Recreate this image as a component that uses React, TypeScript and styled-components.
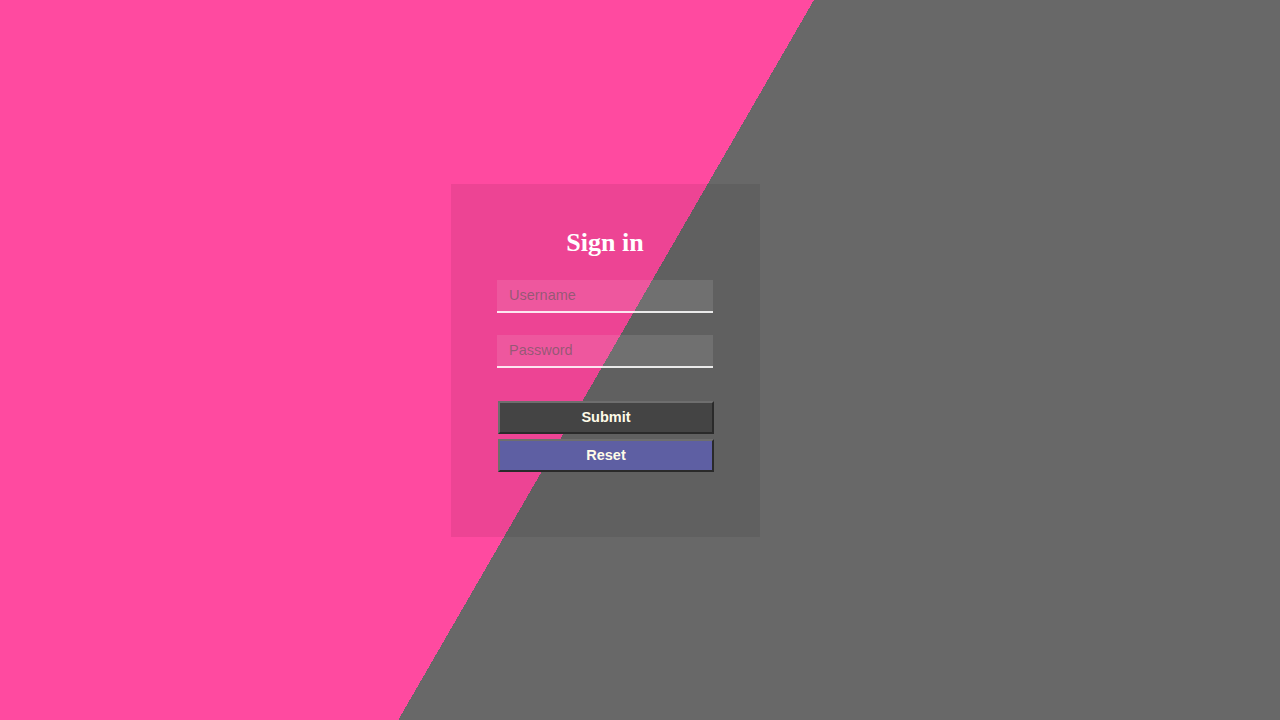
import React from 'react';
import styled, {createGlobalStyle} from 'styled-components';

const GlobalStyle = createGlobalStyle`
  html, body {
    margin: 0;
    padding: 0;
  }

  body {
    font-family: "Liberation Sans", Arial, sans-serif;
  }
`;

export default function App() {
  return (
    <>
      <GlobalStyle/>
      <Page>
        <Card>
          <Title>Sign in</Title>
          <Form onSubmit={e => e.preventDefault()}>
            <Field type="text" placeholder="Username"/>
            <Field type="password" placeholder="Password"/>
            <Buttons>
              <Button type="submit">Submit</Button>
              <Button type="reset" $variant="reset">Reset</Button>
            </Buttons>
          </Form>
        </Card>
      </Page>
    </>
  );
}

const Page = styled.main`
  width: 100%;
  height: 720px;
  display: flex;
  align-items: center;
  padding-left: 451px;
  box-sizing: border-box;
  background: linear-gradient(120deg, #ff4aa0 0%, #ff4aa0 48%, #686868 48%, #686868 100%);
`;

const Card = styled.section`
  width: 309px;
  height: 353px;
  box-sizing: border-box;
  padding: 44px 47px 0 46px;
  background-color: rgba(0, 0, 0, 0.07);
  display: flex;
  flex-direction: column;
`;

const Title = styled.h1`
  margin: 0 0 22px;
  text-align: center;
  font-family: "Liberation Serif", "Times New Roman", serif;
  font-size: 26px;
  font-weight: bold;
  color: #ffffff;
`;

const Form = styled.form`
  display: flex;
  flex-direction: column;
  gap: 22px;
`;

const Field = styled.input`
  width: 216px;
  height: 33px;
  box-sizing: border-box;
  padding: 0 11px 0 12px;
  border: none;
  border-bottom: 2px solid rgba(255, 255, 255, 0.85);
  outline: none;
  background-color: rgba(255, 255, 255, 0.1);
  font-family: "Liberation Sans", Arial, sans-serif;
  font-size: 14.5px;
  color: #ffffff;

  &::placeholder {
    color: rgba(90, 90, 90, 0.6);
  }
`;

const Buttons = styled.div`
  margin-top: 11px;
  display: flex;
  flex-direction: column;
  gap: 5px;
  padding-left: 1px;
`;

const Button = styled.button<{ $variant?: 'submit' | 'reset' }>`
  width: 216px;
  height: 33px;
  box-sizing: border-box;
  border: 2px solid;
  border-color: #6e6e6e #2a2a2a #2a2a2a #6e6e6e;
  background-color: ${p => (p.$variant === 'reset' ? '#5e5fa3' : '#444444')};
  color: #fffbe8;
  font-family: "Liberation Sans", Arial, sans-serif;
  font-size: 14.5px;
  font-weight: bold;
  cursor: pointer;
`;
